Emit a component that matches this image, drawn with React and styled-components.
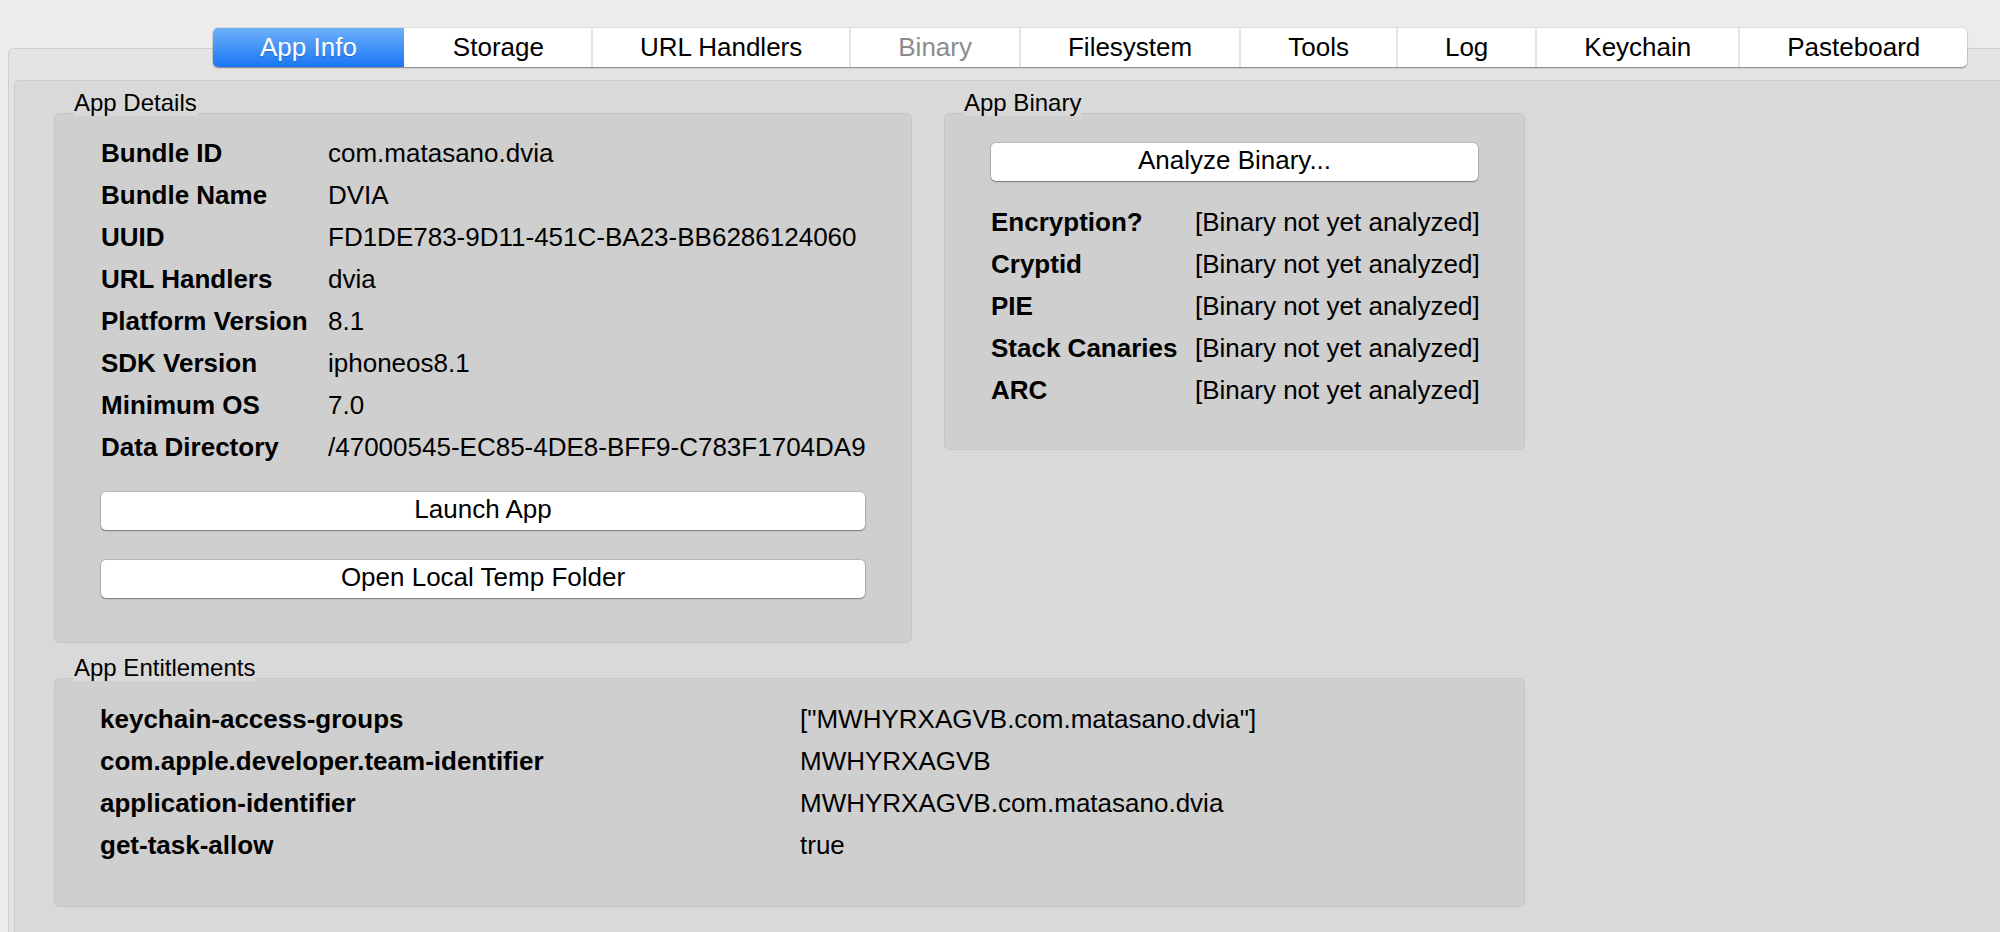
import React from 'react';
import styled, { createGlobalStyle } from 'styled-components';

const GlobalStyle = createGlobalStyle`
  html, body {
    margin: 0;
    padding: 0;
    background: #ececec;
    overflow: hidden;
  }
  body {
    font-family: 'Liberation Sans', Arial, sans-serif;
    color: #000;
  }
`;

const Window = styled.div`
  height: 100vh;
  box-sizing: border-box;
  padding-top: 28px;
  display: flex;
  flex-direction: column;
`;

const TabBar = styled.nav`
  align-self: flex-start;
  margin-left: 213px;
  margin-bottom: -19px;
  height: 39px;
  display: flex;
  background: #fff;
  border-radius: 5px;
  overflow: hidden;
  box-shadow: 0 1px 1.5px rgba(0, 0, 0, 0.4), 0 0 0 0.5px rgba(0, 0, 0, 0.12);
  position: relative;
  z-index: 2;
`;

const Tab = styled.div`
  padding: 0 47px;
  font-size: 26px;
  line-height: 39px;
  white-space: nowrap;
  border-left: 2px solid ${(p) => (p.$divider ? '#e4e4e4' : 'transparent')};
  color: ${(p) => (p.$disabled ? '#8c8c8c' : '#000')};
  ${(p) =>
    p.$active &&
    `
    border-left: none;
    color: #fff;
    background: linear-gradient(#6db0f9, #1976f6);
    text-shadow: 0 1px 1px rgba(0, 0, 0, 0.2);
  `}
`;

const OuterPanel = styled.div`
  flex: 1;
  display: flex;
  margin: 0 -20px -20px 8px;
  padding: 31px 0 0 5px;
  background: #e3e3e3;
  border: 1px solid #cfcfcf;
  border-radius: 5px;
`;

const InnerPanel = styled.div`
  flex: 1;
  padding: 9px 0 0 39px;
  background: #d9d9d9;
  border-top: 1px solid #cbcbcb;
  border-left: 1px solid #cbcbcb;
  border-radius: 5px 0 0 0;
  display: flex;
  flex-direction: column;
  align-items: flex-start;
  gap: 12px;
`;

const GroupRow = styled.div`
  display: flex;
  align-items: flex-start;
  gap: 32px;
`;

const Group = styled.section`
  width: ${(p) => p.$width}px;
  display: flex;
  flex-direction: column;
`;

const GroupLabel = styled.h3`
  align-self: flex-start;
  margin: 0 0 -3px 20px;
  font-size: 24px;
  line-height: 26px;
  font-weight: 400;
  background: #d9d9d9;
  position: relative;
  z-index: 1;
`;

const GroupBox = styled.div`
  padding: ${(p) => p.$pad};
  background: #cfcfcf;
  border: 1px solid #c6c6c6;
  border-radius: 6px;
`;

const InfoGrid = styled.div`
  display: grid;
  grid-template-columns: ${(p) => p.$labelWidth}px auto;
  margin-top: ${(p) => p.$gap || 0}px;
  font-size: 26px;
  line-height: 42px;
`;

const Key = styled.div`
  font-weight: 700;
  white-space: nowrap;
`;

const Value = styled.div`
  white-space: nowrap;
`;

const Button = styled.button`
  display: block;
  width: 100%;
  height: 38px;
  margin-top: ${(p) => p.$gap || 0}px;
  padding: 0 0 3px;
  border: none;
  border-radius: 5px;
  background: #fff;
  box-shadow: 0 0 0 1px rgba(0, 0, 0, 0.1), 0 1px 1.5px rgba(0, 0, 0, 0.35);
  font-family: 'Liberation Sans', Arial, sans-serif;
  font-size: 26px;
  color: #000;
`;

const tabs = [
  { name: 'App Info', active: true },
  { name: 'Storage' },
  { name: 'URL Handlers' },
  { name: 'Binary', disabled: true },
  { name: 'Filesystem' },
  { name: 'Tools' },
  { name: 'Log' },
  { name: 'Keychain' },
  { name: 'Pasteboard' },
];

const details = [
  ['Bundle ID', 'com.matasano.dvia'],
  ['Bundle Name', 'DVIA'],
  ['UUID', 'FD1DE783-9D11-451C-BA23-BB6286124060'],
  ['URL Handlers', 'dvia'],
  ['Platform Version', '8.1'],
  ['SDK Version', 'iphoneos8.1'],
  ['Minimum OS', '7.0'],
  ['Data Directory', '/47000545-EC85-4DE8-BFF9-C783F1704DA9'],
];

const binary = ['Encryption?', 'Cryptid', 'PIE', 'Stack Canaries', 'ARC'];

const entitlements = [
  ['keychain-access-groups', '["MWHYRXAGVB.com.matasano.dvia"]'],
  ['com.apple.developer.team-identifier', 'MWHYRXAGVB'],
  ['application-identifier', 'MWHYRXAGVB.com.matasano.dvia'],
  ['get-task-allow', 'true'],
];

const Rows = ({ rows }) =>
  rows.map(([k, v]) => (
    <React.Fragment key={k}>
      <Key>{k}</Key>
      <Value>{v}</Value>
    </React.Fragment>
  ));

const App = () => {
  return (
    <Window>
      <GlobalStyle />
      <TabBar>
        {tabs.map((t, i) => (
          <Tab
            key={t.name}
            $active={t.active}
            $disabled={t.disabled}
            $divider={i > 1}
          >
            {t.name}
          </Tab>
        ))}
      </TabBar>
      <OuterPanel>
        <InnerPanel>
          <GroupRow>
            <Group $width={858}>
              <GroupLabel>App Details</GroupLabel>
              <GroupBox $pad="18px 46px 44px 46px">
                <InfoGrid $labelWidth={227}>
                  <Rows rows={details} />
                </InfoGrid>
                <Button $gap={24}>Launch App</Button>
                <Button $gap={30}>Open Local Temp Folder</Button>
              </GroupBox>
            </Group>
            <Group $width={581}>
              <GroupLabel>App Binary</GroupLabel>
              <GroupBox $pad="29px 46px 38px 46px">
                <Button>Analyze Binary...</Button>
                <InfoGrid $labelWidth={204} $gap={20}>
                  <Rows rows={binary.map((b) => [b, '[Binary not yet analyzed]'])} />
                </InfoGrid>
              </GroupBox>
            </Group>
          </GroupRow>
          <Group $width={1471}>
            <GroupLabel>App Entitlements</GroupLabel>
            <GroupBox $pad="19px 46px 40px 45px">
              <InfoGrid $labelWidth={700}>
                <Rows rows={entitlements} />
              </InfoGrid>
            </GroupBox>
          </Group>
        </InnerPanel>
      </OuterPanel>
    </Window>
  );
};

export default App;
